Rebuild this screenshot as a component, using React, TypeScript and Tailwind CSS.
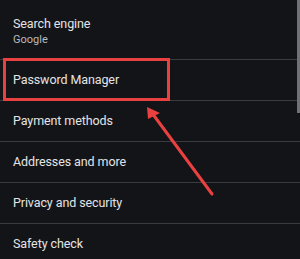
const rows = ["Password Manager", "Payment methods", "Addresses and more", "Privacy and security", "Safety check"];

export default function App() {
  return (
    <div className="relative w-[300px] h-[259px] overflow-hidden bg-[#131417] font-['Roboto',sans-serif] text-[#e4e4e6]">
      <div className="h-[59px] px-[13px] pt-[15px] flex flex-col">
        <span className="text-[12.5px] leading-[18px] tracking-[-0.1px]">Search engine</span>
        <span className="text-[11px] leading-[13px] text-[#b9babd]">Google</span>
      </div>
      {rows.map((r) => (
        <div key={r} className="h-[41px] border-t border-[#3a3b3f] px-[13px] flex items-center">
          <span className="text-[12.5px] tracking-[-0.1px]">{r}</span>
        </div>
      ))}

      {/* scrollbar */}
      <div className="absolute right-0 top-0 w-[3px] h-[113px] bg-[#707176]" />

      {/* highlight box */}
      <div className="absolute left-[3px] top-[58px] w-[167px] h-[43px] border-[3px] border-[#e8413f]" />

      {/* arrow */}
      <svg className="absolute left-0 top-0" width="300" height="259" viewBox="0 0 300 259">
        <line x1="212" y1="194" x2="152" y2="113" stroke="#e8413f" strokeWidth="3" strokeLinecap="round" />
        <polygon points="147,107 148,119 160,113" fill="#e8413f" />
      </svg>
    </div>
  );
}
